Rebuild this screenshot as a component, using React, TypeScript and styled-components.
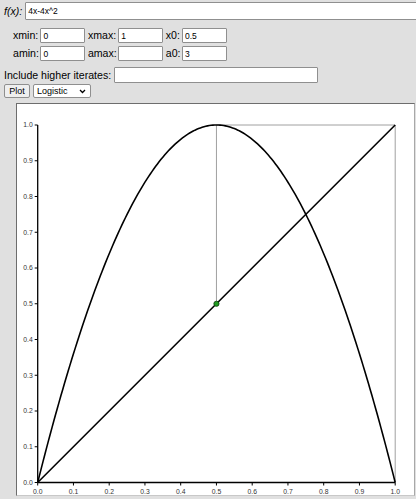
import React from 'react';
import styled, { createGlobalStyle } from 'styled-components';

const GlobalStyle = createGlobalStyle`
  html, body {
    margin: 0;
    padding: 0;
    overflow: hidden;
    background: #e0e0e0;
  }
  body {
    font-family: "Liberation Sans", Arial, sans-serif;
    font-size: 10.6px;
    color: #000;
  }
`;

const Page = styled.div`
  padding: 2px 4px 0;
`;

const FunctionRow = styled.div`
  display: flex;
  align-items: center;
  gap: 3px;
  height: 18px;
`;

const FnLabel = styled.span`
  font-style: italic;
`;

const TextInput = styled.input<{ $w: number; $h?: number }>`
  box-sizing: border-box;
  width: ${(p) => p.$w}px;
  flex: none;
  height: ${(p) => p.$h ?? 15}px;
  margin: 0;
  padding: 0 2px;
  border: 1px solid #8f8f8f;
  border-radius: 1px;
  background: #fff;
  font-family: "Liberation Sans", Arial, sans-serif;
  font-size: 8.5px;
  color: #000;
  outline: none;
`;

const ParamGrid = styled.div`
  display: grid;
  grid-template-columns: repeat(3, auto 45px);
  justify-content: start;
  align-items: center;
  column-gap: 1.5px;
  row-gap: 3px;
  margin: 8px 0 0 8px;
`;

const ParamLabel = styled.span`
  padding-left: 1px;
  line-height: 15px;
`;

const IterRow = styled.div`
  display: flex;
  align-items: center;
  gap: 3px;
  margin-top: 6px;
`;

const ControlRow = styled.div`
  display: flex;
  align-items: center;
  gap: 3px;
  margin-top: 1px;
`;

const PlotButton = styled.button`
  box-sizing: border-box;
  height: 14px;
  width: 26px;
  padding: 0;
  margin: 0;
  border: 1px solid #8f8f8f;
  border-radius: 2px;
  background: #efefef;
  font-family: "Liberation Sans", Arial, sans-serif;
  font-size: 9px;
  color: #000;
`;

const SelectBox = styled.div`
  box-sizing: border-box;
  position: relative;
  width: 58px;
  height: 14px;
  border: 1px solid #8f8f8f;
  border-radius: 2px;
  background: #fff;
  display: flex;
  align-items: center;
  padding-left: 3px;
  font-size: 9px;
`;

const Chevron = styled.svg`
  position: absolute;
  right: 4px;
  top: 4px;
`;

const PlotPanel = styled.div`
  box-sizing: border-box;
  margin: 5px 0 0 12px;
  width: 399px;
  height: 393px;
  border-top: 1px solid #6d6d6d;
  border-left: 1px solid #6d6d6d;
  border-right: 1px solid #a8a8a8;
  border-bottom: 1px solid #c8c8c8;
  background: #fff;
`;

const OX = 20.7;
const OY = 378.5;
const S = 357.5;
const px = (x: number) => OX + x * S;
const py = (y: number) => OY - y * S;

const ticks = Array.from({ length: 11 }, (_, i) => i / 10);

const curve = Array.from({ length: 201 }, (_, i) => {
  const x = i / 200;
  const y = 4 * x - 4 * x * x;
  return `${px(x).toFixed(2)},${py(y).toFixed(2)}`;
}).join(' ');

const Chart: React.FC = () => (
  <svg width="397" height="391" viewBox="0 0 397 391">
    <g stroke="#a0a0a0" strokeWidth="1" fill="none">
      <line x1={px(0.5)} y1={py(0.5)} x2={px(0.5)} y2={py(1)} />
      <line x1={px(0.5)} y1={py(1)} x2={px(1)} y2={py(1)} />
      <line x1={px(1)} y1={py(1)} x2={px(1)} y2={py(0)} />
    </g>
    <g stroke="#000" strokeWidth="1.3">
      <line x1={px(0)} y1={py(0)} x2={px(1)} y2={py(0)} />
      <line x1={px(0)} y1={py(0)} x2={px(0)} y2={py(1)} />
      {ticks.map((t) => (
        <line key={`x${t}`} x1={px(t)} y1={py(0)} x2={px(t)} y2={py(0) + 3} strokeWidth="1" />
      ))}
      {ticks.map((t) => (
        <line key={`y${t}`} x1={px(0) - 3} y1={py(t)} x2={px(0)} y2={py(t)} strokeWidth="1" />
      ))}
    </g>
    <g fontFamily="Liberation Sans, Arial, sans-serif" fontSize="6.8" fill="#333">
      {ticks.map((t) => (
        <text key={`xl${t}`} x={px(t)} y={py(0) + 11} textAnchor="middle">
          {t.toFixed(1)}
        </text>
      ))}
      {ticks.map((t) => (
        <text key={`yl${t}`} x={px(0) - 5} y={py(t) + 2.3} textAnchor="end">
          {t.toFixed(1)}
        </text>
      ))}
    </g>
    <polyline points={curve} fill="none" stroke="#000" strokeWidth="1.6" />
    <line x1={px(0)} y1={py(0)} x2={px(1)} y2={py(1)} stroke="#000" strokeWidth="1.6" />
    <circle cx={px(0.5)} cy={py(0.5)} r="2.6" fill="#1f9a1f" stroke="#0b3d0b" strokeWidth="0.8" />
  </svg>
);

export default function App() {
  return (
    <>
      <GlobalStyle />
      <Page>
        <FunctionRow>
          <FnLabel>f(x):</FnLabel>
          <TextInput $w={420} $h={18} defaultValue="4x-4x^2" />
        </FunctionRow>
        <ParamGrid>
          <ParamLabel>xmin:</ParamLabel>
          <TextInput $w={45} defaultValue="0" />
          <ParamLabel>xmax:</ParamLabel>
          <TextInput $w={45} defaultValue="1" />
          <ParamLabel>x0:</ParamLabel>
          <TextInput $w={45} defaultValue="0.5" />
          <ParamLabel>amin:</ParamLabel>
          <TextInput $w={45} defaultValue="0" />
          <ParamLabel>amax:</ParamLabel>
          <TextInput $w={45} defaultValue="" />
          <ParamLabel>a0:</ParamLabel>
          <TextInput $w={45} defaultValue="3" />
        </ParamGrid>
        <IterRow>
          <span>Include higher iterates:</span>
          <TextInput $w={204} $h={16} defaultValue="" />
        </IterRow>
        <ControlRow>
          <PlotButton type="button">Plot</PlotButton>
          <SelectBox>
            Logistic
            <Chevron width="7" height="5" viewBox="0 0 7 5">
              <path d="M1 1 L3.5 3.5 L6 1" fill="none" stroke="#000" strokeWidth="1.3" />
            </Chevron>
          </SelectBox>
        </ControlRow>
        <PlotPanel>
          <Chart />
        </PlotPanel>
      </Page>
    </>
  );
}
